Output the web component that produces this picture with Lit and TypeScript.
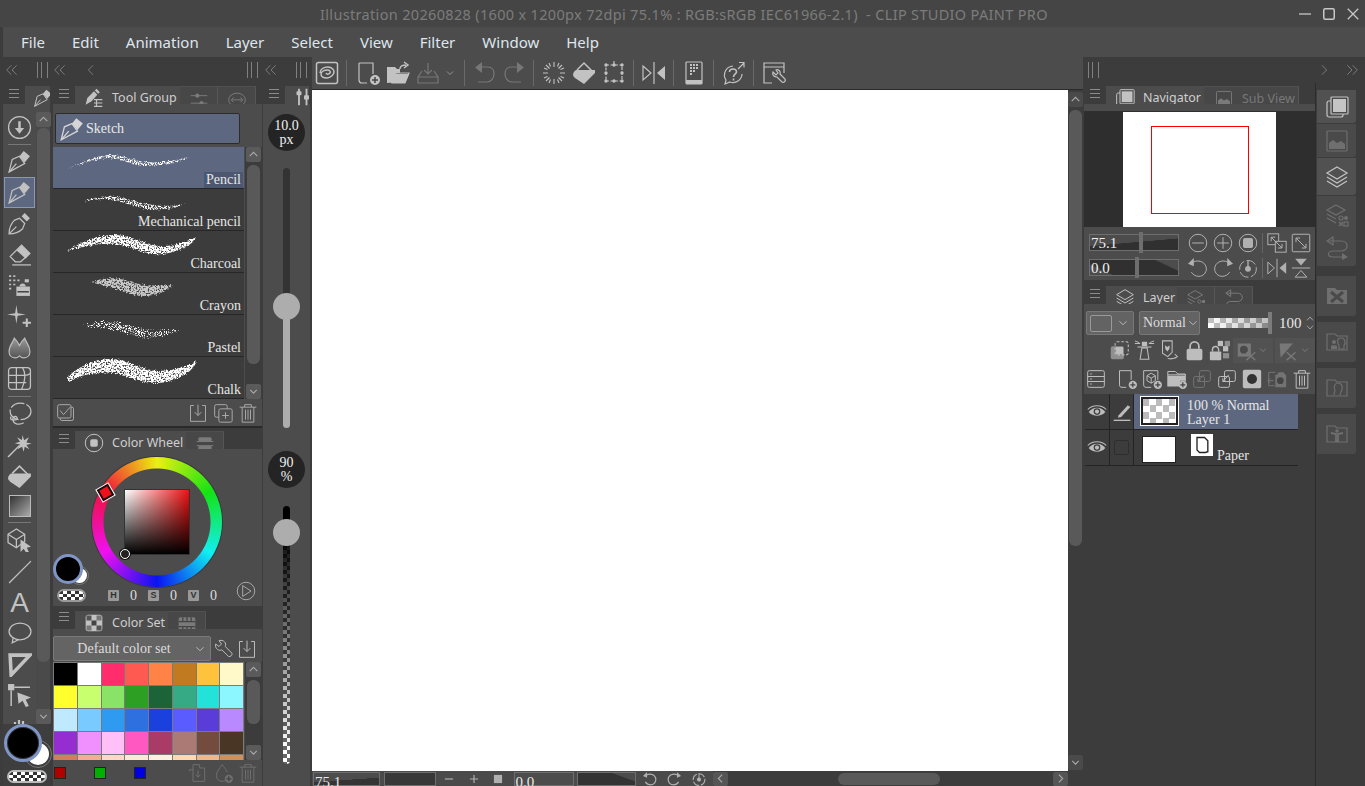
import { LitElement, css, html, svg } from 'lit';
import { customElement } from 'lit/decorators.js';

const icon = (body: unknown, cls = '') => html`<svg class="ic ${cls}" viewBox="0 0 24 24">${body}</svg>`;

const plusBadge = svg`<circle cx="19" cy="19" r="5" class="f"/><path d="M19 16v6M16 19h6" class="cut"/>`;

const ICONS = {
  download: svg`<circle cx="12" cy="12" r="10.5"/><path d="M12 6v8" stroke-width="2.4"/><path d="M7.5 12.5h9L12 18z" class="f"/>`,
  pen: svg`<path d="M2 22 5 10l7-3 5 7z"/><path d="M2 22l7-8"/><path d="M12 7l4-5 6 5-5 6z" class="f"/>`,
  inkpen: svg`<path d="M2 22c0-6 2-10 5-13l5-2 5 5-2 5c-3 3-7 5-13 5z"/><path d="M2 22l7-7"/><path d="M14 5l3-3 5 5-3 3z" class="f"/>`,
  eraser: svg`<path d="M3 14 14 3l8 8-9 8H8z"/><path d="M9 8l9 8 4-5-8-8z" class="f"/><path d="M5 22h18"/>`,
  airbrush: svg`<path d="M9 13h13v9H9z" class="f"/><path d="M10 18h11" class="cut"/><path d="M12 13c0-4 6-4 6 0" class="f"/><path d="M17 6h4v3h-4z" class="f"/><path d="M2 3h2M6 3h2M2 7h2M6 7h2M10 7h2M2 11h2M6 11h2M2 15h2" stroke-width="1.6"/>`,
  sparkle: svg`<path d="M9 1l1.2 7.8L18 10l-7.8 1.2L9 19l-1.2-7.8L0 10l7.8-1.2z" class="f"/><path d="M19 14v8M15 18h8" stroke-width="2"/>`,
  blend: svg`<defs><linearGradient id="bl" x1="0" y1="0" x2="0" y2="1"><stop offset="0" stop-color="#9a9a9a"/><stop offset="1" stop-color="#555"/></linearGradient></defs><path d="M2 16c0-6 4-9 5-13 2 2 4 5 5 7 1-2 3-5 5-7 1 4 5 7 5 13 0 4-3 6-6 6-2 0-3-1-4-2-1 1-2 2-4 2-3 0-6-2-6-6z" fill="url(#bl)" stroke="#bbb"/>`,
  grid: svg`<rect x="1.5" y="1.5" width="21" height="21" rx="3"/><path d="M1.5 9h13c3 0 5 1 8-2M1.5 16h17M9 1.5v21M15 1.5c3 5 3 12-1 21"/>`,
  lasso: svg`<ellipse cx="13" cy="9" rx="10" ry="8" stroke-dasharray="14 2"/><path d="M4 14c-2 3 2 4 5 3 2-1 0-4-2-3s-2 6 2 7 7-1 7-1"/>`,
  wand: svg`<path d="M1 23 12 12" stroke-width="1.4"/><path d="M15 2l1.4 5 4.6-3-2.4 5 5 1-5 1.5 3 4-4.6-2.4-1 5-1.5-4.8-4.500 2.400 2.500-4.600-5-1.200 5-1.400-2.800-4.500 4.600 2.700z" class="f"/>`,
  fill: svg`<path d="M5 9l7-7 10 10" stroke-width="1.500"/><path d="M1 14c0-3 2-5 4-5h18v3L12 23 3 17c-1-1-2-2-2-3z" class="f"/>`,
  line: svg`<path d="M2 23 23 2" stroke-width="1.2"/>`,
  balloon: svg`<ellipse cx="12.500" cy="10" rx="10.500" ry="8"/><path d="M6 16l-1 5 6-3"/>`,
  triangle: svg`<path d="M3 3h19L4 22z" stroke-width="3.400"/>`,
  select: svg`<rect x="1" y="1" width="6" height="6" class="f"/><path d="M7 4h15M4 7v15" stroke-width="1.400"/><path d="M10 9l13 5-5 2 3 6-3 1-3-6-4 3z" class="f"/>`,
  cube: svg`<path d="M1 6l8-5 8 5v7l-8 6-8-5z"/><path d="M1 6l8 5 8-5M9 11v8"/><path d="M13 11l10 7-4 1 2 4-3 0-2-3-3 3z" class="f"/>`,
  toolGroup: svg`<path d="M2 20l2-8 8-8 4 4-7 8z" class="f"/><path d="M13 3l2-2 4 4-2 2z" class="f"/><path d="M12 14h10M12 18h10M12 22h10M15 14v8" stroke-width="1.400"/>`,
  sliders: svg`<path d="M2 8h20M2 17h20"/><circle cx="10" cy="8" r="2.500" class="f"/><circle cx="15" cy="17" r="2.500" class="f"/>`,
  vsliders: svg`<path d="M6 2v20M15 2v20" stroke-width="2.200"/><rect x="3" y="5" width="6" height="5" rx="1" class="f"/><rect x="12" y="10" width="6" height="5" rx="1" class="f"/>`,
  link: svg`<ellipse cx="12" cy="13" rx="10" ry="8"/><path d="M6 13h12M8 10l-3 3 3 3M16 10l3 3-3 3"/>`,
  wheel: svg`<circle cx="12" cy="12" r="10.500"/><rect x="7.500" y="7.500" width="9" height="9" rx="2" class="f"/>`,
  hsv: svg`<rect x="4" y="4" width="16" height="5" rx="2" class="f"/><rect x="4" y="14" width="16" height="5" rx="2" class="f"/><path d="M2 9h20M2 14h20" />`,
  colorset: svg`<rect x="2" y="2" width="20" height="20" rx="3" class="f"/><rect x="3" y="3" width="6" height="6" fill="#555" stroke="none"/><rect x="15" y="3" width="6" height="6" fill="#777" stroke="none"/><rect x="9" y="9" width="6" height="6" fill="#444" stroke="none"/><rect x="3" y="15" width="6" height="6" fill="#777" stroke="none"/><rect x="15" y="15" width="6" height="6" fill="#555" stroke="none"/>`,
  film: svg`<rect x="2" y="4" width="20" height="16" rx="2" class="f"/><path d="M2 9h20M2 15h20M7 4v5M12 4v5M17 4v5M7 15v5M12 15v5M17 15v5" class="cut"/>`,
  checks: svg`<rect x="5" y="5" width="16" height="16" rx="2"/><rect x="2" y="2" width="16" height="16" rx="2" fill="#4e4e4e"/><path d="M5 9l4 5 8-9"/>`,
  importBox: svg`<path d="M7 3H3v19h18V3h-4"/><path d="M12 2v13M8 11l4 4 4-4"/>`,
  copyPlus: svg`<rect x="2" y="2" width="15" height="15" rx="2"/><rect x="7" y="7" width="16" height="16" rx="2" fill="#4e4e4e"/><path d="M15 11v8M11 15h8"/>`,
  trash: svg`<path d="M2 5h20M8 5V2h8v3M5 5v18h14V5M9 8v12M12 8v12M15 8v12"/>`,
  play: svg`<circle cx="12" cy="12" r="10.500"/><path d="M8 5.500 18 12 8 18.500z"/>`,
  wrench: svg`<path d="M2 6l4 3 3-3-3-4c3-1 7 0 8 4 0 1 0 2-.5 3l8 8c1 2-2 5-4 4l-8-8c-1 .5-2 .5-3 .5-4-1-5-4-4.500-7.500z"/>`,
  addDrop: svg`<path d="M11 2c-3 5-7 8-7 13 0 4 3 7 7 7s5-2 6-3"/><path d="M11 2c2 3 5 6 6 9"/>${plusBadge}`,
  importFile: svg`<path d="M6 2h8v4h6v16H6z" /><path d="M2 10v-2h4M12 9v8M9 14l3 3 3-3"/>`,
  clip: svg`<rect x="1.500" y="1.500" width="21" height="21" rx="2" stroke-width="1.500"/><path d="M5 12c0-4 4-6 8-6s6 3 6 5-3 6-7 6-6-2-6-4 3-4 6-4 4 2 3 3-3 2-4 0" stroke-width="1.500"/>`,
  newFile: svg`<path d="M3 2h14v11M11 22H6c-2 0-3-1-3-3V2"/>${plusBadge}`,
  open: svg`<path d="M1 22V6h8l2 2h3v13z" class="f"/><path d="M6 22l4-10h13l-4 10z" fill="#4a4a4a"/><path d="M5 22l4-9h14l-4 9z" class="f"/><path d="M14 8c0-3 2-4 6-4M18 1l4 3-4 3" stroke-width="1.500"/>`,
  save: svg`<path d="M6 10 2 16v6h20v-6l-4-6"/><path d="M2 16h20M12 2v11M8 9l4 4 4-4"/>`,
  chevDown: svg`<path d="M6 9l6 6 6-6"/>`,
  undo: svg`<path d="M9 1v11L2 6.500z" class="f"/><path d="M9 6h6c4 0 6 3 6 7s-3 8-7 8H5"/>`,
  redo: svg`<path d="M15 1v11l7-5.500z" class="f"/><path d="M15 6H9c-4 0-6 3-6 7s3 8 7 8h9"/>`,
  spinner: svg`<path d="M12 1v5M12 18v5M1 12h5M18 12h5M4 4l3.500 3.500M16.500 16.500 20 20M20 4l-3.500 3.500M7.500 16.500 4 20M7 2l1.500 3.500M17 2l-1.500 3.500M2 7l3.500 1.500M2 17l3.500-1.500M22 7l-3.500 1.500M22 17l-3.500-1.500M7 22l1.500-3.500M17 22l-1.500-3.500" stroke-width="1.100"/>`,
  transform: svg`<rect x="4" y="4" width="16" height="16" stroke-dasharray="3 1.500"/><g class="f"><circle cx="4" cy="4" r="1.700"/><circle cx="12" cy="4" r="1.700"/><circle cx="20" cy="4" r="1.700"/><circle cx="4" cy="12" r="1.700"/><circle cx="20" cy="12" r="1.700"/><circle cx="4" cy="20" r="1.700"/><circle cx="12" cy="20" r="1.700"/><circle cx="20" cy="20" r="1.700"/></g><path d="M12 4V0" />`,
  flip: svg`<path d="M1 5l8 7-8 7z"/><path d="M23 5l-8 7 8 7z" class="f"/><path d="M12 1v22"/>`,
  device: svg`<rect x="4" y="1" width="16" height="22" rx="1"/><path d="M4 19h16v4H4z" class="f"/><path d="M8 4h2M11 4h2M14 4h2M8 7h2M11 7h2M14 7h2M8 10h2M11 10h2M8 13h2" stroke-width="1.800"/>`,
  help: svg`<path d="M11 5a9 9 0 0 0-7 14l-1 4 5-2a9 9 0 0 0 12-8"/><path d="M7.500 11c0-4 7-4 7 0 0 2-3 2-3 5M11.500 17.500v2" stroke-width="1.600"/><path d="M16 8l6-6M17 1.500h5v5"/>`,
  appWin: svg`<path d="M10 22H2V2h20v10M2 6h20"/><path d="M11 11l3 3 2-2-2-3c2-1 5 1 4 4l5 5c1 2-1 4-3 3l-5-5c-3 0-5-2-4-5z"/>`,
  nav: svg`<rect x="2" y="6" width="16" height="16" rx="2"/><rect x="6" y="2" width="17" height="17" rx="1" fill="#4a4a4a"/><rect x="8" y="4" width="13" height="13" class="f"/>`,
  subview: svg`<rect x="2" y="2" width="20" height="20" rx="1"/><path d="M4 20v-6l4-3 4 3 4-2 4 3v5z" class="f"/>`,
  layers: svg`<path d="M12 2l10 6-10 6L2 8z"/><path d="M2 12l10 6 10-6M2 16l10 6 10-6"/>`,
  layerProp: svg`<path d="M11 2l9 5-9 5-9-5z"/><path d="M2 11l9 5M2 15l9 5"/><circle cx="16" cy="15" r="2"/><circle cx="21" cy="15" r="2" class="f"/><path d="M14 19l4 4M18 19l-4 4"/><rect x="19" y="19" width="4" height="4"/>`,
  history: svg`<path d="M8 1 2 5l6 4V1z"/><path d="M3 5h13c8 0 8 10 0 10H8c-6 0-6 6 0 6h12"/><path d="M17 17l6 4-6 3z" class="f"/>`,
  minus: svg`<circle cx="12" cy="12" r="10.500"/><path d="M5 12h14"/>`,
  plus: svg`<circle cx="12" cy="12" r="10.500"/><path d="M5 12h14M12 5v14"/>`,
  stopC: svg`<circle cx="12" cy="12" r="10.500"/><rect x="6" y="6" width="12" height="12" rx="2" class="f"/>`,
  fitA: svg`<rect x="1" y="1" width="13" height="13" fill="#4a4a4a"/><rect x="10" y="10" width="13" height="13" fill="#4a4a4a"/><path d="M5 5l13 13M5 10V5h5M18 13v5h-5"/>`,
  fitB: svg`<rect x="1.500" y="1.500" width="21" height="21" rx="1"/><path d="M6 6l12 12M6 11V6h5M18 13v5h-5"/>`,
  rotL: svg`<path d="M6 5c8-4 16 1 16 8 0 5-4 9-9 9-4 0-7-2-9-5"/><path d="M7 0v10L0 7z" class="f"/>`,
  rotR: svg`<path d="M18 5C10 1 2 6 2 13c0 5 4 9 9 9 4 0 7-2 9-5"/><path d="M17 0v10l7-3z" class="f"/>`,
  rotReset: svg`<circle cx="12" cy="13" r="10" stroke-dasharray="12 3"/><circle cx="12" cy="13" r="3.500" class="f"/><path d="M12 3v10" stroke-width="1.600"/>`,
  flipV: svg`<path d="M5 1h14l-7 8z" class="f"/><path d="M1 12h22"/><path d="M5 23h14l-7-8z"/>`,
  clipLayer: svg`<rect x="2" y="7" width="15" height="15" rx="2" class="f dim"/><rect x="7" y="2" width="15" height="15" rx="2" stroke-dasharray="3 2"/><rect x="8" y="8" width="8" height="8" class="f"/>`,
  tower: svg`<path d="M9 2h6v5H9z" class="f"/><path d="M1 4h6M17 4h6M1 1l5 2M23 1l-5 2M9 9h6l2 13H7z" /><path d="M4 8h16" />`,
  heart: svg`<path d="M4 1h11v13l-5 5-6-4z"/><path d="M7 6l2.500 2L12 6v4l-2.500 3L7 10z" class="f"/><path d="M10 21c3 1 8 0 11-2M18 16l3 3-3 2"/>`,
  lock: svg`<rect x="3" y="10" width="18" height="13" rx="2" class="f"/><path d="M7 10V7a5 5 0 0 1 10 0v3" stroke-width="2"/>`,
  lockAlpha: svg`<rect x="1" y="13" width="13" height="10" rx="1" class="f"/><path d="M4 13v-2a3.500 3.500 0 0 1 7 0v2" stroke-width="1.600"/><g class="f"><rect x="10" y="1" width="6" height="6"/><rect x="18" y="1" width="6" height="6" opacity=".6"/><rect x="16" y="7" width="6" height="6" /><rect x="16" y="15" width="7" height="6" opacity=".6"/></g>`,
  maskOff: svg`<rect x="2" y="4" width="15" height="15" class="f"/><circle cx="9" cy="11" r="4.500" fill="#4a4a4a" stroke="none"/><path d="M12 14l10 9M22 14l-10 9" stroke-width="1.600"/>`,
  triOff: svg`<path d="M2 4h15L3 20z" class="f"/><path d="M10 14l10 9M20 14l-10 9" stroke-width="1.600"/>`,
  listView: svg`<rect x="2" y="2" width="20" height="20" rx="2"/><path d="M2 9h20M2 15h20M5 6h2M5 12h2M5 18h2"/>`,
  new3d: svg`<path d="M11 22H5c-2 0-3-1-3-3V2h17v11"/><path d="M6 8l5-3 5 3v6l-5 3-5-3zM6 8l5 3 5-3M11 11v6"/>${plusBadge}`,
  newFolder: svg`<path d="M1 21V3h9l3 3h9v9"/><path d="M1 7h21" /><path d="M1 8h21v6h-6v7H1z" class="f"/>${plusBadge}`,
  mergeDown: svg`<rect x="9" y="2" width="13" height="13" rx="2"/><rect x="2" y="9" width="13" height="13" rx="2"/><path d="M14 7l-7 8M7 11v4h4"/>`,
  layerMask: svg`<rect x="1" y="1" width="22" height="22" rx="2" class="f"/><circle cx="12" cy="12" r="6" fill="#333" stroke="none"/>`,
  camera: svg`<path d="M10 7h2l2-3h6l2 3h1v15H10z" class="f"/><circle cx="16" cy="14" r="4" fill="#444" stroke="none"/><path d="M1 14h7M4 11l-3 3 3 3M10 4H2v16h7"/>`,
  eye: svg`<path d="M2 12c5-7 15-7 20 0-5 6-15 6-20 0z" class="f"/><circle cx="12" cy="11.500" r="4" fill="#3c3c3c" stroke="none"/><circle cx="12" cy="11.500" r="2.500" class="f"/><path d="M1 9c5-6 17-6 22 0" stroke-width="1.400"/>`,
  pencilEdit: svg`<path d="M8 16 19 4l3 2-11 12-4 1z" class="f"/><path d="M2 22h20" stroke-width="1.600"/>`,
  paper: svg`<path d="M6 3h9l4 4v13l-3 1H9l-3-3z" fill="#fff" stroke="#222" stroke-width="1.600"/>`,
  dockX: svg`<path d="M2 20V4h8l2 2h10v14z" class="f"/><path d="M6 8l12 10M18 8 6 18" stroke="#4a4a4a" stroke-width="3"/>`,
  dockFolder: svg`<path d="M2 20V4h8l2 2h10v14z"/><circle cx="9" cy="12" r="2" class="f"/><path d="M6 19v-3c0-1 6-1 6 0v3" class="f"/><path d="M15 8c-3 0-3 6-1 7v4h5v-4c2-1 1-7-2-7z"/>`,
  dockHead: svg`<path d="M2 20V4h8l2 2h10v14z"/><path d="M9 19c0-3 1-3 1-5-2-3 0-7 3-7s5 3 4 6c0 3-2 3-2 6"/>`,
  dockBody: svg`<path d="M2 20V4h8l2 2h10v14z"/><circle cx="12" cy="9" r="1.800" class="f"/><path d="M6 11l5 1v7h2v-7l5-1" stroke-width="1.800"/>`,
  winMin: svg`<path d="M4 12h16" stroke-width="1.700"/>`,
  winMax: svg`<rect x="5" y="5" width="14" height="14" rx="2" stroke-width="2"/>`,
  winClose: svg`<path d="M5 5l14 14M19 5 5 19" stroke-width="1.700"/>`,
  chevL: svg`<path d="M15 5l-7 7 7 7"/>`,
  chevR: svg`<path d="M9 5l7 7-7 7"/>`,
  dblL: svg`<path d="M11 5l-7 7 7 7M19 5l-7 7 7 7"/>`,
  dblR: svg`<path d="M5 5l7 7-7 7M13 5l7 7-7 7"/>`,
};

type IconName = keyof typeof ICONS;

const TOOLS: (IconName | 'sep' | 'A')[] = [
  'download', 'sep', 'pen', 'pen', 'inkpen', 'eraser', 'airbrush', 'sparkle', 'blend', 'grid', 'sep',
  'lasso', 'wand', 'fill',
];
const TOOLS2: (IconName | 'sep' | 'A')[] = ['cube', 'line', 'A', 'balloon', 'triangle', 'select'];

const BRUSHES = [
  { name: 'Pencil', filter: 'grainThin', fill: '#fff', d: 'M16 21C30 15 42 9 56 8 70 8 80 13 92 15 108 16 122 14 136 10 122 17 108 19 92 19 78 18 70 12 56 11 42 12 30 16 16 21Z' },
  { name: 'Mechanical pencil', filter: 'grainThin', fill: '#fff', d: 'M30 13C42 8 56 6 70 9 84 13 96 16 110 17 118 17 124 16 132 15 122 20 108 21 94 20 80 17 68 12 54 10 46 10 38 11 30 13Z' },
  { name: 'Charcoal', filter: 'grain', fill: '#fff', d: 'M14 20C30 10 46 3 64 4 84 6 96 16 112 15 124 15 134 10 144 6 138 15 126 21 110 23 92 25 80 15 62 13 46 12 30 16 14 20Z' },
  { name: 'Crayon', filter: 'grain', fill: '#c8c8c8', d: 'M38 9C50 5 62 4 72 7 84 11 96 14 120 12 108 22 94 25 82 22 70 18 54 13 38 9Z' },
  { name: 'Pastel', filter: 'grainSparse', fill: '#fff', d: 'M32 11C46 4 62 5 74 10 90 15 108 16 128 15 110 23 92 25 76 19 62 14 48 12 32 11Z' },
  { name: 'Chalk', filter: 'grain', fill: '#fff', d: 'M14 22C22 10 42 2 60 2 78 3 90 14 106 14 120 14 134 9 144 4 140 14 130 20 114 25 96 29 80 21 62 16 44 14 28 18 16 25Z' },
];

const PALETTE = [
  '#000000', '#ffffff', '#ff2d6b', '#ff5a52', '#ff8347', '#c27a20', '#ffc23c', '#fff8c8',
  '#ffff2d', '#c8ff6e', '#88e366', '#2da024', '#1c6438', '#36aa85', '#22e2da', '#8cf7ff',
  '#bfe9ff', '#78caff', '#2f9bf0', '#2e70e0', '#1a41dd', '#5a5cff', '#5a3cd8', '#b98aff',
  '#962dd0', '#f090ff', '#ffc0f8', '#ff58c0', '#aa3a66', '#ab7a74', '#734c3e', '#4a3624',
  '#d08058', '#f0b090', '#ffd8c8', '#ffe8d8', '#fff0e0', '#ffd8b0', '#f0b888', '#d09058',
];

const MENU = ['File', 'Edit', 'Animation', 'Layer', 'Select', 'View', 'Filter', 'Window', 'Help'];

@customElement('app-root')
export class AppRoot extends LitElement {
  static override styles = css`
    :host {
      display: block;
      width: 1365px;
      height: 786px;
      overflow: hidden;
      background: #3c3c3c;
      color: #d8d8d8;
      font-family: 'Noto Sans', sans-serif;
      --panel: #4c4c4c;
      --dark: #3c3c3c;
      --line: #2a2a2a;
      --selected: #5d6880;
    }

    .ic { width: 24px; height: 24px; flex: none; fill: none; stroke: currentColor; stroke-width: 1.2; color: #c2c2c2; }
    .ic .f { fill: currentColor; stroke: none; }
    .ic .cut { stroke: #444; stroke-width: 1.500; fill: none; }
    .ic .dim { opacity: 0.6; }
    .ic.muted { color: #777; }
    .ic.s12 { width: 12px; height: 12px; }

    .title {
      height: 27px;
      background: #454545;
      display: flex;
      align-items: center;
      padding-left: 320px;
      font-size: 14.500px;
      letter-spacing: 0.33px;
      color: #7c7c7c;
      white-space: pre;
    }
    .win-btns { margin-left: auto; display: flex; gap: 6px; padding-right: 3px; }
    .win-btns .ic { width: 18px; height: 18px; color: #c8c8c8; }

    .menu {
      height: 30px;
      margin-left: 3px;
      background: #4c4c4c;
      display: flex;
      align-items: center;
      gap: 27px;
      padding-left: 18px;
      font-size: 15px;
      color: #dfe6ee;
    }

    .work { display: flex; height: 729px; }
    .left { width: 310px; flex: none; display: flex; flex-direction: column; }
    .center { width: 771px; margin-left: 2px; flex: none; display: flex; flex-direction: column; }
    .rightwrap { width: 281px; margin-left: 1px; flex: none; display: flex; flex-direction: column; }

    .strip { height: 26px; flex: none; display: flex; align-items: center; color: #8a8a8a; }
    .strip .ic { color: #8a8a8a; width: 16px; height: 16px; }
    .grip { width: 9px; height: 16px; flex: none; border-left: 1px solid #808080; border-right: 1px solid #808080; position: relative; }
    .grip::after { content: ''; position: absolute; left: 3px; top: 0; bottom: 0; border-left: 1px solid #808080; }

    .left-strip { padding-left: 4px; }
    .left-strip > :nth-child(2) { margin-left: 17px; }
    .left-strip > :nth-child(3) { margin-left: 4px; }
    .left-strip > :nth-child(4) { margin-left: 15px; }
    .left-strip > :nth-child(5) { margin-left: 148px; }
    .left-strip > :nth-child(6) { margin-left: 5px; }
    .left-strip > :nth-child(7) { margin-left: 17px; }

    .left-body { flex: 1; min-height: 0; display: flex; padding-left: 3px; }

    /* tool column */
    .tools { width: 47px; flex: none; display: flex; flex-direction: column; background: var(--panel); }
    .head { height: 21px; flex: none; background: var(--dark); display: flex; align-items: flex-end; }
    .burger { width: 22px; height: 21px; flex: none; display: flex; flex-direction: column; justify-content: center; gap: 3px; padding: 0 6px; box-sizing: border-box; align-self: flex-start; }
    .burger i { display: block; height: 1px; background: #8c8c8c; }
    .tab { height: 18px; box-sizing: border-box; display: flex; align-items: center; gap: 8px; background: #474747; border-right: 1px solid #555; border-top: 1px solid #505050; font-size: 12.500px; line-height: 12px; color: #cfcfcf; padding: 6px 5px 0; overflow: hidden; white-space: nowrap; }
    .tab.on { background: var(--panel); border: none; color: #cfcfcf; padding-left: 9px; overflow: visible; }
    .tab.on.clip { overflow-x: clip; }
    .tab .ic { width: 20px; height: 20px; }
    .tab.off .ic { color: #7a7a7a; }
    .tab.off { color: #777; justify-content: center; }

    .tools-body { flex: 1; display: flex; min-height: 0; padding-top: 8px; }
    .tool-list { width: 33px; flex: none; display: flex; flex-direction: column; align-items: center; }
    .tool { height: 31px; width: 31px; flex: none; display: grid; place-items: center; box-sizing: border-box; }
    .tool.on { background: var(--selected); border: 1px solid #8a98b8; }
    .tool.grad { height: 28px; }
    .tool .ic { width: 25px; height: 25px; }
    .tool-sep { height: 1px; width: 23px; background: #777; flex: none; margin: 2px 0; }
    .tool-sep.first { margin: 1px 0; }
    .gradbox { width: 20px; height: 20px; border: 1px solid #bbb; background: linear-gradient(135deg, #333, #aaa); }
    .letter { font-family: 'Liberation Sans', sans-serif; font-size: 28px; line-height: 1; color: #c2c2c2; }
    .hand { width: 20px; height: 9px; flex: none; margin-top: 8px; }
    .vscroll { flex: 1; background: var(--dark); display: flex; flex-direction: column; align-items: center; min-width: 0; }
    .tools-scroll { width: 15px; margin-left: 0; background: #4a4a4a; }
    .arrow { width: 15px; height: 15px; flex: none; background: #5a5a5a; display: grid; place-items: center; border-radius: 2px; }
    .arrow .ic { width: 13px; height: 13px; color: #aaa; stroke-width: 2; }
    .thumb { width: 13px; background: #595959; border-radius: 6px; }
    .tools-thumb { height: 534px; margin-top: 1px; }
    .grow { flex: 1; }

    .colors { position: relative; height: 62px; flex: none; background: #3e3e3e; }
    .fg { position: absolute; left: 1px; top: 0; width: 32px; height: 32px; border-radius: 50%; background: #000; border: 3px solid #7f95c6; box-shadow: inset 0 0 0 1px #333; }
    .bg { position: absolute; left: 22px; top: 17px; width: 22px; height: 22px; border-radius: 50%; background: #fff; border: 2px solid #3e3e3e; outline: 1px solid #777; }
    .pill { position: absolute; left: 4px; top: 46px; width: 36px; height: 9px; border-radius: 7px; border: 2px solid #bbb; background: repeating-conic-gradient(#fff 0 25%, #333 0 50%) 0 0 / 8px 6px; }

    /* middle panel */
    .mid { width: 209px; flex: none; margin-left: 3px; display: flex; flex-direction: column; background: var(--panel); }
    .mid .tab.on { width: 105px; }
    .mid .tab.off { width: 38px; }
    .mid .tab.on.wheel-tab { width: 111px; }
    .mid .tab.on.set-tab { width: 93px; }
    .band { height: 7px; flex: none; }
    .sketch-row { height: 36px; flex: none; padding: 2px 22px 0 2px; box-sizing: border-box; }
    .sketch { height: 31px; box-sizing: border-box; background: var(--selected); border: 1px solid #2c2c2c; border-radius: 2px; display: flex; align-items: center; gap: 1px; padding-left: 3px; font-family: 'Liberation Serif', serif; font-size: 14px; color: #e8e8e8; }
    .sketch .ic { width: 26px; height: 26px; color: #d5d5d5; }

    .list-row { height: 252px; flex: none; display: flex; }
    .list { width: 191px; flex: none; background: var(--dark); }
    .brush { height: 42px; box-sizing: border-box; border-bottom: 1px solid #262626; position: relative; display: flex; justify-content: flex-end; align-items: flex-end; font-family: 'Liberation Serif', serif; font-size: 14px; color: #e6e6e6; padding: 0 3px 0 0; }
    .brush.on { background: var(--selected); }
    .brush.on span { background: #4d5870; padding: 0 2px; margin-right: -2px; }
    .brush svg { position: absolute; left: 0; top: 0; width: 190px; height: 41px; }
    .brush span { position: relative; }
    .list-scroll { width: 15px; margin-left: 1px; }

    .foot { height: 27px; flex: none; display: flex; align-items: center; gap: 5px; padding: 0 4px 0 3px; }
    .foot .ic { width: 20px; height: 20px; color: #a8a8a8; }
    .foot .push { margin-left: auto; }
    .gap { height: 2px; background: var(--line); flex: none; }

    .wheel-area { height: 157px; flex: none; position: relative; display: flex; justify-content: center; padding-top: 8px; box-sizing: border-box; }
    .wheel { width: 130px; height: 130px; border-radius: 50%; margin-left: -1px; display: grid; place-items: center; position: relative;
      background: radial-gradient(circle, #4c4c4c 0 53px, transparent 54px), conic-gradient(#ecf00f, #13e313 60deg, #10f0f0 120deg, #0a14f0 180deg, #f010f0 240deg, #f0103c 300deg, #ecf00f);
      box-shadow: 0 0 0 1px #3a3a3a; }
    .sv { width: 64px; height: 64px; box-shadow: 0 0 0 1px #333; background: linear-gradient(to bottom, transparent, #000), linear-gradient(to right, #fff, #f01010); }
    .hue-mark { position: absolute; left: 46px; top: 37px; width: 9px; height: 9px; background: #f0101c; border: 2px solid #111; outline: 1px solid #fff; transform: rotate(-30deg); }
    .sv-mark { position: absolute; left: 67px; top: 100px; width: 8px; height: 8px; border-radius: 50%; border: 1.500px solid #fff; background: #222; box-shadow: 0 0 0 1px #111; }
    .wheel-fg { position: absolute; left: 0; top: 105px; width: 24px; height: 24px; border-radius: 50%; background: #000; border: 3px solid #7f95c6; z-index: 1; }
    .wheel-bg { position: absolute; left: 19px; top: 119px; width: 15px; height: 15px; border-radius: 50%; background: #fff; outline: 1px solid #777; outline-offset: 1px; z-index: 0; }
    .wheel-pill { position: absolute; left: 4px; top: 140px; width: 25px; height: 9px; border-radius: 7px; border: 2px solid #999; background: repeating-conic-gradient(#fff 0 25%, #333 0 50%) 0 0 / 8px 6px; }
    .hsv { position: absolute; left: 55px; top: 140px; display: flex; align-items: center; font-family: 'Liberation Serif', serif; font-size: 14px; line-height: 13px; color: #ddd; }
    .hsv b { width: 11px; height: 11px; background: #999; color: #333; font: bold 9px/11px 'Liberation Sans', sans-serif; text-align: center; border-radius: 1px; }
    .hsv span { width: 29px; text-align: center; }
    .wheel-play { position: absolute; left: 183px; top: 132px; width: 20px; height: 20px; color: #a8a8a8; }

    .dropdown-row { height: 33px; flex: none; display: flex; align-items: flex-end; padding-bottom: 1px; box-sizing: border-box; }
    .dropdown { width: 158px; height: 25px; box-sizing: border-box; background: #646464; border: 1px solid #7a7a7a; border-radius: 2px; display: flex; align-items: center; justify-content: center; position: relative; font-family: 'Liberation Serif', serif; font-size: 14px; color: #dcdcdc; padding-right: 16px; }
    .dropdown .ic, .select .ic { width: 14px; height: 14px; color: #bbb; stroke-width: 1.700; }
    .dropdown .ic { position: absolute; right: 3px; top: 5px; }
    .dropdown-row > .ic { width: 20px; height: 20px; margin: 0 0 2px 3px; color: #bbb; }

    .pal-row { height: 98px; flex: none; display: flex; overflow: hidden; }
    .palette { width: 191px; flex: none; display: grid; grid-template-columns: repeat(8, 1fr); grid-auto-rows: 22px; gap: 1px; align-content: start; background: #7a7a7a; padding: 1px; box-sizing: border-box; overflow: hidden; }
    .sw-foot { height: 26px; flex: none; display: flex; align-items: center; padding: 0 4px 0 1px; }
    .mini { width: 10px; height: 10px; border: 1px solid #222; margin-right: 28px; }
    .sw-foot .ic { width: 20px; height: 20px; color: #6e6e6e; margin-left: 5px; }
    .sw-foot .push { margin-left: auto; }

    /* brush size column */
    .sizes { width: 47px; flex: none; margin-left: 1px; display: flex; flex-direction: column; align-items: center; background: var(--panel); }
    .sizes .head { align-self: stretch; }
    .sizes .tab { width: 24px; padding: 3px 0 0 9px; }
    .dial { width: 37px; height: 37px; border-radius: 50%; background: #242424; flex: none; display: flex; flex-direction: column; justify-content: center; align-items: center; font-family: 'Liberation Serif', serif; font-size: 14px; line-height: 14px; color: #f0f0f0; }
    .dial.first { margin-top: 10px; }
    .slide { width: 7px; border-radius: 4px; position: relative; flex: none; }
    .slide.one { height: 260px; margin-top: 17px; background: linear-gradient(#333 0 138px, #adadad 138px); }
    .slide.two { height: 258px; margin-top: 18px; background: linear-gradient(#000 0 24px, transparent 24px), linear-gradient(to bottom, #000 8%, rgba(0,0,0,0) 95%), repeating-conic-gradient(#fff 0 25%, #666 0 50%) 0 0 / 8px 8px; }
    .knob { position: absolute; left: -10px; width: 27px; height: 27px; border-radius: 50%; background: #adadad; }
    .slide.one .knob { top: 125px; }
    .slide.two .knob { top: 13px; }
    .dial.second { margin-top: 23px; }

    /* centre */
    .toolbar { height: 33px; flex: none; background: var(--panel); display: flex; align-items: center; border-bottom: 1px solid #2a2a2a; box-sizing: border-box; }
    .tb-group { display: flex; align-items: center; gap: 6px; padding: 0 7px 0 8px; height: 26px; border-right: 1px solid #6a6a6a; flex: none; }
    .tb-group:last-child { border-right: none; }
    .tb-group:nth-child(1) { padding-left: 3px; }
    .tb-group:nth-child(2) { padding: 0 8px 0 9px; }
    .tb-group:nth-child(2) .s12 { margin-left: -2px; }
    .tb-group:nth-child(3) { gap: 5px; }
    .canvas-row { flex: 1; min-height: 0; display: flex; }
    .canvas { width: 756px; flex: none; background: #fff; }
    .canvas-scroll { width: 15px; background: var(--dark); display: flex; flex-direction: column; align-items: center; }
    .canvas-scroll .thumb { height: 436px; margin-top: 3px; }
    .canvas-scroll .arrow { background: #4a4a4a; margin-top: 2px; }
    .canvas-scroll .arrow.end { margin-top: auto; margin-bottom: 1px; }
    .status { height: 15px; flex: none; width: 756px; background: #4a4a4a; display: flex; align-items: center; overflow: hidden; font-family: 'Liberation Serif', serif; font-size: 15px; color: #e8e8e8; }
    .st-field { height: 14px; border: 1px solid #6e6e6e; box-sizing: border-box; margin-left: 1px; line-height: 18px; padding-left: 1px; background: linear-gradient(176deg, #4c4c4c 55%, #343434 56%); flex: none; }
    .st-field.wide { width: 67px; }
    .st-field.mid2 { width: 52px; margin-left: 4px; margin-right: 1px; background: #383838; }
    .st-field.mid3 { width: 60px; margin-left: 3px; background: #4c4c4c; }
    .st-field.mid4 { width: 59px; margin-left: 3px; margin-right: 2px; background: linear-gradient(200deg, #4c4c4c 25%, #333 26%); }
    .st-btn { width: 24.500px; display: grid; place-items: center; flex: none; }
    .st-btn .ic { width: 14px; height: 14px; color: #b0b0b0; stroke-width: 2; }
    .st-scroll { display: flex; align-items: center; flex: 1; min-width: 0; margin-left: 2px; background: #3c3c3c; height: 15px; }
    .st-scroll .arrow { height: 14px; background: #555; }
    .st-scroll .thumb { width: 102px; height: 12px; margin-left: 110px; }
    .st-scroll .end { margin-left: auto; }

    /* right side */
    .right-strip { padding-left: 4px; }
    .right-strip .push { margin-left: auto; }
    .right-strip .ic:last-child { margin: 0 5px 0 12px; }
    .right-body { flex: 1; min-height: 0; display: flex; }
    .panels { width: 231px; flex: none; display: flex; flex-direction: column; }
    .panels .head { height: 21px; padding-left: 0; }
    .panels .tab.on { width: 98px; }
    .panels .tab.off { width: 95px; }
    .panels .tab.sub { justify-content: flex-start; gap: 9px; padding-left: 11px; overflow: visible; }
    .panels .tab.sub .ic { width: 18px; height: 18px; }
    .panels .tab.on.layer-tab { width: 71px; }
    .panels .tab.off.mini-tab { width: 38px; }
    .nav-band { height: 7px; flex: none; background: var(--panel); }
    .preview { height: 116px; flex: none; background: #2e2e2e; display: flex; justify-content: center; }
    .paper { width: 153px; height: 115px; margin-top: 1px; background: #fff; display: grid; place-items: center; }
    .viewport { width: 96px; height: 86px; border: 1px solid #f00; }
    .nav-ctrl { height: 53px; flex: none; background: var(--panel); display: flex; flex-direction: column; gap: 8px; padding: 7px 0 0 5px; box-sizing: border-box; }
    .nc-row { display: flex; align-items: center; height: 17px; }
    .nc-slider { width: 90px; height: 17px; box-sizing: border-box; border: 1px solid #6e6e6e; position: relative; font-family: 'Liberation Serif', serif; font-size: 15px; line-height: 17px; padding-left: 1px; color: #f0f0f0; margin-right: 6px; flex: none; }
    .nc-slider.zoom { background: linear-gradient(175deg, #4c4c4c 48%, #303030 50%); }
    .nc-slider.rot { background: linear-gradient(205deg, #4c4c4c 18%, #303030 20% 80%, #4c4c4c 82%); }
    .nc-slider::after { content: ''; position: absolute; top: -3px; bottom: -3px; width: 4px; background: #6e6e6e; }
    .nc-slider.zoom::after { left: 49px; }
    .nc-slider.rot::after { left: 45px; }
    .nc-row .ic { width: 20px; height: 20px; margin: 0 2.500px; color: #b0b0b0; }
    .nc-row .ic:last-child { margin-left: 1.500px; }
    .nc-sep { width: 1px; height: 20px; background: #666; margin: 0 1.500px 0 2px; flex: none; }
    .pad3 { height: 3px; flex: none; }

    .layer-ctrl { height: 90px; flex: none; background: var(--panel); }
    .lc-row { display: flex; align-items: center; }
    .lc-one { height: 34px; padding: 4px 0 0 2px; box-sizing: border-box; }
    .select { height: 24px; box-sizing: border-box; background: #636363; border: 1px solid #777; border-radius: 2px; display: flex; align-items: center; justify-content: space-between; padding: 0 3px; font-family: 'Liberation Serif', serif; font-size: 14px; color: #dcdcdc; flex: none; }
    .select.a { width: 48px; }
    .select.a u { width: 20px; height: 15px; border: 1.500px solid #999; border-radius: 2px; display: block; }
    .select.b { width: 61px; margin-left: 5px; }
    .opacity { width: 60px; height: 10px; margin-left: 8px; background: repeating-conic-gradient(#fff 0 25%, #aaa 0 50%) 0 0 / 12px 10px; position: relative; flex: none; }
    .opacity::before { content: ''; position: absolute; inset: 0; background: linear-gradient(to right, rgba(255,255,255,.3), rgba(70,70,70,.35)); }
    .opacity::after { content: ''; position: absolute; left: 60px; top: -6px; bottom: -6px; width: 4px; background: #7c7c7c; }
    .op-val { margin-left: 11px; font-family: 'Liberation Serif', serif; font-size: 15px; color: #e8e8e8; }
    .spin { display: flex; flex-direction: column; margin-left: 2px; }
    .spin .ic { width: 12px; height: 9px; stroke-width: 2; color: #bbb; }
    .lc-two { height: 24px; padding-left: 23.500px; gap: 2px; }
    .lc-two .ic { width: 21px; height: 21px; margin: 0 1px; color: #bdbdbd; }
    .lc-two .offbox { width: 40px; height: 25px; background: #525252; display: flex; align-items: center; flex: none; justify-content: center; }
    .lc-two .offbox .ic { color: #787878; margin: 0; }
    .lc-two .offbox .ic.s12 { width: 12px; height: 12px; color: #969696; }
    .lc-three { height: 32px; padding: 1px 0 0 2px; box-sizing: border-box; }
    .lc-three .ic { width: 20px; height: 20px; margin-right: 5px; color: #bdbdbd; }
    .lc-three .ic.faded { color: #737373; }
    .lc-three .ic.first { margin-right: 11px; }

    .layers { flex: 1; display: flex; flex-direction: column; width: 214px; padding-left: 1px; box-sizing: border-box; }
    .layer { height: 36px; flex: none; display: flex; border-bottom: 1px solid #242424; box-sizing: border-box; }
    .lc { flex: none; display: grid; place-items: center; border-right: 1px solid #242424; box-sizing: border-box; }
    .lc.eye { width: 25px; }
    .lc.mode { width: 24px; }
    .lc .ic { width: 20px; height: 20px; color: #bcbcbc; }
    .lc-body { flex: 1; display: flex; align-items: flex-start; font-family: 'Liberation Serif', serif; font-size: 14px; line-height: 14px; color: #e6e6e6; }
    .lc-body.on { background: var(--selected); }
    .thumb-a { width: 39px; height: 30px; margin: 2px 0 0 6px; border: 1px solid #fff; background: #222; padding: 2px; box-sizing: border-box; }
    .thumb-a i { display: block; width: 100%; height: 100%; background: repeating-conic-gradient(#fff 0 25%, #bbb 0 50%) 0 0 / 13px 13px; }
    .lc-text { margin: 5px 0 0 8px; }
    .noicon { width: 13px; height: 13px; border: 1px solid #2e2e2e; border-radius: 2px; }
    .thumb-b { width: 32px; height: 25px; margin: 6px 0 0 8px; background: #fff; border: 1px solid #222; }
    .thumb-c { width: 22px; height: 22px; margin: 4px 0 0 15px; background: #fff; display: grid; place-items: center; }
    .thumb-c .ic { width: 20px; height: 20px; }
    .paper-name { margin: 19px 0 0 4px; }

    .dock { flex: 1; min-width: 0; padding: 7px 9px 0 1px; border-left: 1px solid #2c2c2c; display: flex; flex-direction: column; }
    .dock-tab { width: 39px; background: #4a4a4a; box-sizing: border-box; margin-bottom: 1px; display: flex; flex-direction: column; align-items: center; justify-content: center; gap: 9px; flex: none; border-bottom-right-radius: 3px; }
    .dock-tab .ic { width: 24px; height: 24px; color: #6f6f6f; }
    .dock-tab.on { background: #515151; }
    .dock-tab.on .ic { color: #c4c4c4; }
    .dt1, .dt2 { height: 33px; }
    .dt3 { height: 37px; }
    .dt4 { height: 70px; margin-bottom: 10px; }
    .dt5, .dt6, .dt7 { height: 40px; margin-bottom: 6px; }
    .dt8 { height: 40px; }
  `;

  private tool(name: IconName | 'sep' | 'A', i: number) {
    if (name === 'sep') return html`<div class="tool-sep ${i === 1 ? 'first' : ''}"></div>`;
    if (name === 'A') return html`<div class="tool"><span class="letter">A</span></div>`;
    return html`<div class="tool ${i === 3 ? 'on' : ''}">${icon(ICONS[name])}</div>`;
  }

  private burger() {
    return html`<div class="burger"><i></i><i></i><i></i></div>`;
  }

  private scrollbar(thumb: number) {
    return html`<div class="vscroll list-scroll">
      <div class="arrow">${icon(svg`<path d="M5 15l7-7 7 7"/>`)}</div>
      <div class="thumb" style="height:${thumb}px;margin-top:3px"></div>
      <div class="grow"></div>
      <div class="arrow">${icon(ICONS.chevDown)}</div>
    </div>`;
  }

  private renderTools() {
    return html`<div class="tools">
      <div class="head">${this.burger()}<div class="tab on clip" style="width:25px;padding-left:8px">${icon(ICONS.pen)}</div></div>
      <div class="tools-body">
        <div class="tool-list">
          ${TOOLS.map((t, i) => this.tool(t, i))}
          <div class="tool grad"><div class="gradbox"></div></div>
          <div class="tool-sep"></div>
          ${TOOLS2.map((t, i) => this.tool(t, i + 100))}
          <svg class="ic hand" viewBox="0 0 20 9"><path d="M5 9V3M9 9V1M13 9V2M17 9V5" stroke-width="2.200"/></svg>
        </div>
        <div class="vscroll tools-scroll">
          <div class="arrow">${icon(svg`<path d="M5 15l7-7 7 7"/>`)}</div>
          <div class="thumb tools-thumb"></div>
          <div class="grow"></div>
          <div class="arrow">${icon(ICONS.chevDown)}</div>
        </div>
      </div>
      <div class="colors">
        <div class="bg"></div><div class="fg"></div><div class="pill"></div>
      </div>
    </div>`;
  }

  private renderMiddle() {
    return html`<div class="mid">
      <div class="head">${this.burger()}
        <div class="tab on">${icon(ICONS.toolGroup)}Tool Group</div>
        <div class="tab off">${icon(ICONS.sliders)}</div>
        <div class="tab off">${icon(ICONS.link)}</div>
      </div>
      <div class="band"></div>
      <div class="sketch-row"><div class="sketch">${icon(ICONS.pen)}Sketch</div></div>
      <div class="list-row">
        <div class="list">
          ${BRUSHES.map((b, i) => html`<div class="brush ${i === 0 ? 'on' : ''}">
            <svg viewBox="0 0 190 41"><path d=${b.d} fill=${b.fill} filter="url(#${b.filter})"/></svg>
            <span>${b.name}</span>
          </div>`)}
        </div>
        ${this.scrollbar(199)}
      </div>
      <div class="foot">
        ${icon(ICONS.checks)}
        <span class="push"></span>
        ${icon(ICONS.importBox)}${icon(ICONS.copyPlus)}${icon(ICONS.trash)}
      </div>
      <div class="gap"></div>
      <div class="head">${this.burger()}
        <div class="tab on wheel-tab">${icon(ICONS.wheel)}Color Wheel</div>
        <div class="tab off">${icon(ICONS.hsv)}</div>
      </div>
      <div class="wheel-area">
        <div class="wheel"><div class="sv"></div></div>
        <div class="hue-mark"></div>
        <div class="sv-mark"></div>
        <div class="wheel-bg"></div><div class="wheel-fg"></div><div class="wheel-pill"></div>
        <div class="hsv">
          <b>H</b><span>0</span><b>S</b><span>0</span><b>V</b><span>0</span>
        </div>
        <svg class="ic wheel-play" viewBox="0 0 24 24">${ICONS.play}</svg>
      </div>
      <div class="head" style="height:23px">${this.burger()}
        <div class="tab on set-tab">${icon(ICONS.colorset)}Color Set</div>
        <div class="tab off">${icon(ICONS.film)}</div>
      </div>
      <div class="dropdown-row">
        <div class="dropdown">Default color set ${icon(ICONS.chevDown)}</div>
        ${icon(ICONS.wrench)}${icon(ICONS.importBox)}
      </div>
      <div class="pal-row">
        <div class="palette">${PALETTE.map((c) => html`<div style="background:${c}"></div>`)}</div>
        ${this.scrollbar(44)}
      </div>
      <div class="sw-foot">
        <div class="mini" style="background:#b00000"></div>
        <div class="mini" style="background:#00b000"></div>
        <div class="mini" style="background:#0000e0"></div>
        <span class="push"></span>
        ${icon(ICONS.importFile)}${icon(ICONS.addDrop)}${icon(ICONS.trash)}
      </div>
    </div>`;
  }

  private renderSizes() {
    return html`<div class="sizes">
      <div class="head">${this.burger()}<div class="tab on clip">${icon(ICONS.vsliders)}</div></div>
      <div class="dial first"><span>10.0</span><span>px</span></div>
      <div class="slide one"><div class="knob"></div></div>
      <div class="dial second"><span>90</span><span>%</span></div>
      <div class="slide two"><div class="knob"></div></div>
    </div>`;
  }

  private renderToolbar() {
    const groups: IconName[][] = [
      ['clip'],
      ['newFile', 'open', 'save'],
      ['undo', 'redo'],
      ['spinner', 'fill', 'transform'],
      ['flip'],
      ['device'],
      ['help'],
      ['appWin'],
    ];
    return html`<div class="toolbar">
      ${groups.map((g, i) => html`<div class="tb-group">
        ${g.map((n) => icon(ICONS[n], n === 'undo' || n === 'redo' || n === 'save' ? 'muted' : ''))}
        ${i === 1 ? icon(ICONS.chevDown, 's12') : ''}
      </div>`)}
    </div>`;
  }

  private renderStatus() {
    return html`<div class="status">
      <div class="st-field wide">75.1</div>
      <div class="st-field mid2"></div>
      <div class="st-btn">${icon(svg`<path d="M5 12h14"/>`)}</div>
      <div class="st-btn">${icon(svg`<path d="M5 12h14M12 5v14"/>`)}</div>
      <div class="st-btn">${icon(svg`<rect x="5" y="5" width="14" height="14" class="f"/>`)}</div>
      <div class="st-field mid3">0.0</div>
      <div class="st-field mid4"></div>
      <div class="st-btn">${icon(ICONS.rotL)}</div>
      <div class="st-btn">${icon(ICONS.rotR)}</div>
      <div class="st-btn">${icon(ICONS.rotReset)}</div>
      <div class="st-scroll">
        <div class="arrow">${icon(ICONS.chevL)}</div>
        <div class="thumb"></div>
        <div class="arrow end">${icon(ICONS.chevR)}</div>
      </div>
    </div>`;
  }

  private renderNavigator() {
    return html`
      <div class="head">${this.burger()}
        <div class="tab on">${icon(ICONS.nav)}Navigator</div>
        <div class="tab off sub">${icon(ICONS.subview)}Sub View</div>
      </div>
      <div class="nav-band"></div>
      <div class="preview"><div class="paper"><div class="viewport"></div></div></div>
      <div class="nav-ctrl">
        <div class="nc-row">
          <div class="nc-slider zoom">75.1</div>
          ${icon(ICONS.minus)}${icon(ICONS.plus)}${icon(ICONS.stopC)}
          <div class="nc-sep"></div>
          ${icon(ICONS.fitA)}${icon(ICONS.fitB)}
        </div>
        <div class="nc-row">
          <div class="nc-slider rot">0.0</div>
          ${icon(ICONS.rotL)}${icon(ICONS.rotR)}${icon(ICONS.rotReset)}
          <div class="nc-sep"></div>
          ${icon(ICONS.flip)}${icon(ICONS.flipV)}
        </div>
      </div>
      <div class="pad3"></div>`;
  }

  private renderLayer() {
    const first: IconName[] = ['clipLayer', 'tower', 'heart', 'lock', 'lockAlpha'];
    const third: IconName[] = ['newFile', 'new3d', 'newFolder', 'mergeDown', 'mergeDown', 'layerMask', 'camera', 'trash'];
    return html`
      <div class="head">${this.burger()}
        <div class="tab on layer-tab">${icon(ICONS.layers)}Layer</div>
        <div class="tab off mini-tab">${icon(ICONS.layerProp)}</div>
        <div class="tab off mini-tab">${icon(ICONS.history)}</div>
      </div>
      <div class="layer-ctrl">
        <div class="lc-row lc-one">
          <div class="select a"><u></u>${icon(ICONS.chevDown)}</div>
          <div class="select b">Normal${icon(ICONS.chevDown)}</div>
          <div class="opacity"></div>
          <span class="op-val">100</span>
          <div class="spin">${icon(svg`<path d="M4 17l8-9 8 9"/>`)}${icon(svg`<path d="M4 7l8 9 8-9"/>`)}</div>
        </div>
        <div class="lc-row lc-two">
          ${first.map((n) => icon(ICONS[n]))}
          <div class="offbox">${icon(ICONS.maskOff)}${icon(ICONS.chevDown, 's12')}</div>
          <div class="offbox">${icon(ICONS.triOff)}${icon(ICONS.chevDown, 's12')}</div>
        </div>
        <div class="lc-row lc-three">
          ${icon(ICONS.listView, 'first')}
          ${third.map((n, i) => icon(ICONS[n], i === 3 || i === 6 ? 'faded' : ''))}
        </div>
      </div>
      <div class="layers">
        <div class="layer">
          <div class="lc eye">${icon(ICONS.eye)}</div>
          <div class="lc mode">${icon(ICONS.pencilEdit)}</div>
          <div class="lc-body on">
            <div class="thumb-a"><i></i></div>
            <div class="lc-text">100 % Normal<br />Layer 1</div>
          </div>
        </div>
        <div class="layer">
          <div class="lc eye">${icon(ICONS.eye)}</div>
          <div class="lc mode"><div class="noicon"></div></div>
          <div class="lc-body">
            <div class="thumb-b"></div>
            <div class="thumb-c">${icon(ICONS.paper)}</div>
            <div class="paper-name">Paper</div>
          </div>
        </div>
      </div>`;
  }

  override render() {
    return html`
      <svg width="0" height="0" style="position:absolute">
        <defs>
          <filter id="grain" x="-5%" y="-25%" width="110%" height="150%" color-interpolation-filters="sRGB">
            <feTurbulence type="fractalNoise" baseFrequency="0.6" numOctaves="3" seed="4" result="n" />
            <feDisplacementMap in="SourceGraphic" in2="n" scale="5" xChannelSelector="R" yChannelSelector="G" result="d" />
            <feColorMatrix in="n" type="matrix" values="0 0 0 0 1  0 0 0 0 1  0 0 0 0 1  5 0 0 0 -1.500" result="m" />
            <feComposite in="d" in2="m" operator="in" />
          </filter>
          <filter id="grainThin" x="-5%" y="-40%" width="110%" height="180%" color-interpolation-filters="sRGB">
            <feTurbulence type="fractalNoise" baseFrequency="0.7" numOctaves="2" seed="9" result="n" />
            <feDisplacementMap in="SourceGraphic" in2="n" scale="4" xChannelSelector="R" yChannelSelector="G" result="d" />
            <feColorMatrix in="n" type="matrix" values="0 0 0 0 1  0 0 0 0 1  0 0 0 0 1  5 0 0 0 -1.900" result="m" />
            <feComposite in="d" in2="m" operator="in" />
          </filter>
          <filter id="grainSparse" x="-5%" y="-25%" width="110%" height="150%" color-interpolation-filters="sRGB">
            <feTurbulence type="fractalNoise" baseFrequency="0.95" numOctaves="2" seed="2" result="n" />
            <feDisplacementMap in="SourceGraphic" in2="n" scale="7" xChannelSelector="R" yChannelSelector="G" result="d" />
            <feColorMatrix in="n" type="matrix" values="0 0 0 0 .8  0 0 0 0 .8  0 0 0 0 .8  7 0 0 0 -3.300" result="m" />
            <feComposite in="d" in2="m" operator="in" />
          </filter>
        </defs>
      </svg>
      <div class="title">
        <span>Illustration 20260828 (1600 x 1200px 72dpi 75.1% : RGB:sRGB IEC61966-2.1)  - CLIP STUDIO PAINT PRO</span>
        <div class="win-btns">${icon(ICONS.winMin)}${icon(ICONS.winMax)}${icon(ICONS.winClose)}</div>
      </div>
      <div class="menu">${MENU.map((m) => html`<span>${m}</span>`)}</div>
      <div class="work">
        <div class="left">
          <div class="strip left-strip">
            ${icon(ICONS.dblL)}<div class="grip"></div>${icon(ICONS.dblL)}${icon(ICONS.chevL)}
            <div class="grip"></div>${icon(ICONS.dblL)}<div class="grip"></div>
          </div>
          <div class="left-body">
            ${this.renderTools()}${this.renderMiddle()}${this.renderSizes()}
          </div>
        </div>
        <div class="center">
          ${this.renderToolbar()}
          <div class="canvas-row">
            <div class="canvas"></div>
            <div class="canvas-scroll">
              <div class="arrow">${icon(svg`<path d="M5 15l7-7 7 7"/>`)}</div>
              <div class="thumb"></div>
              <div class="arrow end">${icon(ICONS.chevDown)}</div>
            </div>
          </div>
          ${this.renderStatus()}
        </div>
        <div class="rightwrap">
          <div class="strip right-strip">
            <div class="grip"></div>
            <span class="push"></span>
            ${icon(ICONS.chevR)}${icon(ICONS.dblR)}
          </div>
          <div class="right-body">
            <div class="panels">${this.renderNavigator()}${this.renderLayer()}</div>
            <div class="dock">
              <div class="dock-tab on dt1">${icon(ICONS.nav)}</div>
              <div class="dock-tab dt2">${icon(ICONS.subview)}</div>
              <div class="dock-tab on dt3">${icon(ICONS.layers)}</div>
              <div class="dock-tab dt4">${icon(ICONS.layerProp)}${icon(ICONS.history)}</div>
              <div class="dock-tab dt5">${icon(ICONS.dockX)}</div>
              <div class="dock-tab dt6">${icon(ICONS.dockFolder)}</div>
              <div class="dock-tab dt7">${icon(ICONS.dockHead)}</div>
              <div class="dock-tab dt8">${icon(ICONS.dockBody)}</div>
            </div>
          </div>
        </div>
      </div>
    `;
  }
}

declare global {
  interface HTMLElementTagNameMap {
    'app-root': AppRoot;
  }
}
